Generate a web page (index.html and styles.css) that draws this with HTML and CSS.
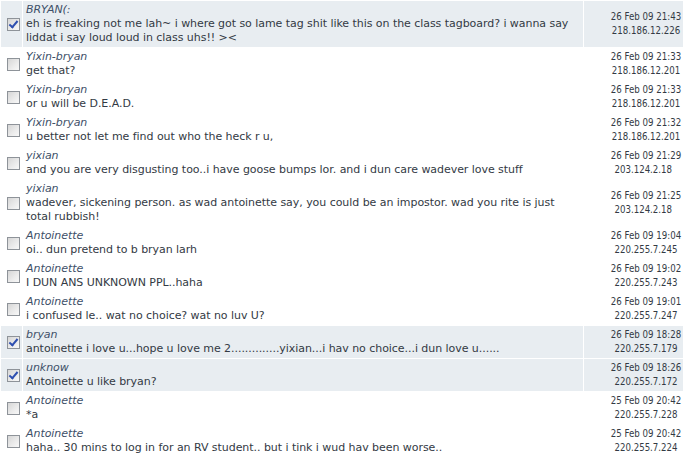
FILE: index.html
```html
<!DOCTYPE html>
<html>
<head>
<meta charset="utf-8">
<link rel="stylesheet" href="styles.css">
</head>
<body>
<table class="tags">
<colgroup><col class="c-chk"><col class="c-msg"><col class="c-date"></colgroup>
<tbody>
<tr class="sel"><td class="chk"><span class="box on"></span></td><td class="msg"><div class="name">BRYAN(:</div><div class="text">eh is freaking not me lah~ i where got so lame tag shit like this on the class tagboard? i wanna say liddat i say loud loud in class uhs!! &gt;&lt;</div></td><td class="date">26 Feb 09 21:43<br>218.186.12.226</td></tr>
<tr><td class="chk"><span class="box"></span></td><td class="msg"><div class="name">Yixin-bryan</div><div class="text">get that?</div></td><td class="date">26 Feb 09 21:33<br>218.186.12.201</td></tr>
<tr><td class="chk"><span class="box"></span></td><td class="msg"><div class="name">Yixin-bryan</div><div class="text">or u will be D.E.A.D.</div></td><td class="date">26 Feb 09 21:33<br>218.186.12.201</td></tr>
<tr><td class="chk"><span class="box"></span></td><td class="msg"><div class="name">Yixin-bryan</div><div class="text">u better not let me find out who the heck r u,</div></td><td class="date">26 Feb 09 21:32<br>218.186.12.201</td></tr>
<tr><td class="chk"><span class="box"></span></td><td class="msg"><div class="name">yixian</div><div class="text">and you are very disgusting too..i have goose bumps lor. and i dun care wadever love stuff</div></td><td class="date">26 Feb 09 21:29<br>203.124.2.18&nbsp;&nbsp;</td></tr>
<tr><td class="chk"><span class="box"></span></td><td class="msg"><div class="name">yixian</div><div class="text">wadever, sickening person. as wad antoinette say, you could be an impostor. wad you rite is just total rubbish!</div></td><td class="date">26 Feb 09 21:25<br>203.124.2.18&nbsp;&nbsp;</td></tr>
<tr><td class="chk"><span class="box"></span></td><td class="msg"><div class="name">Antoinette</div><div class="text">oi.. dun pretend to b bryan larh</div></td><td class="date">26 Feb 09 19:04<br>220.255.7.245</td></tr>
<tr><td class="chk"><span class="box"></span></td><td class="msg"><div class="name">Antoinette</div><div class="text">I DUN ANS UNKNOWN PPL..haha</div></td><td class="date">26 Feb 09 19:02<br>220.255.7.243</td></tr>
<tr><td class="chk"><span class="box"></span></td><td class="msg"><div class="name">Antoinette</div><div class="text">i confused le.. wat no choice? wat no luv U?</div></td><td class="date">26 Feb 09 19:01<br>220.255.7.247</td></tr>
<tr class="sel"><td class="chk"><span class="box on"></span></td><td class="msg"><div class="name">bryan</div><div class="text">antoinette i love u...hope u love me 2..............yixian...i hav no choice...i dun love u......</div></td><td class="date">26 Feb 09 18:28<br>220.255.7.179</td></tr>
<tr class="sel"><td class="chk"><span class="box on"></span></td><td class="msg"><div class="name">unknow</div><div class="text">Antoinette u like bryan?</div></td><td class="date">26 Feb 09 18:26<br>220.255.7.172</td></tr>
<tr><td class="chk"><span class="box"></span></td><td class="msg"><div class="name">Antoinette</div><div class="text">*a</div></td><td class="date">25 Feb 09 20:42<br>220.255.7.228</td></tr>
<tr><td class="chk"><span class="box"></span></td><td class="msg"><div class="name">Antoinette</div><div class="text">haha.. 30 mins to log in for an RV student.. but i tink i wud hav been worse..</div></td><td class="date">25 Feb 09 20:42<br>220.255.7.224</td></tr>
</tbody>
</table>
</body>
</html>
```

FILE: styles.css
```css
html, body {
  margin: 0;
  padding: 0;
  background: #ffffff;
}
body {
  font-family: "DejaVu Sans", Verdana, sans-serif;
  color: #333a44;
  overflow: hidden;
}
.tags {
  width: 684px;
  border-collapse: separate;
  border-spacing: 1px;
  table-layout: fixed;
}
.c-chk { width: 21px; }
.c-msg { width: 560px; }
.c-date { width: 99px; }
.tags td {
  box-sizing: border-box;
  padding: 2px 2px;
  line-height: 14px;
}
.sel td {
  background: #e8edf1;
}
.chk {
  vertical-align: middle;
  text-align: left;
  padding-left: 6px !important;
}
.msg {
  vertical-align: top;
  padding-left: 3px !important;
  padding-right: 6px !important;
  font-size: 11px;
  letter-spacing: -0.05px;
}
.name {
  font-style: italic;
  color: #405068;
}
.text {
  color: #333a44;
}
.date {
  vertical-align: middle;
  text-align: center;
  white-space: nowrap;
  font-family: "DejaVu Sans Condensed", "DejaVu Sans", sans-serif;
  font-stretch: condensed;
  font-size: 9.6px;
  color: #333a44;
  padding-right: 0 !important;
  padding-left: 25px !important;
}
.box {
  display: block;
  width: 11px;
  height: 11px;
  border: 1px solid #8e9399;
  background: linear-gradient(135deg, #d6d6d6 0%, #ececec 60%, #f8f8f8 100%);
  position: relative;
}
.box.on::after {
  content: "";
  position: absolute;
  left: 3px;
  top: 0px;
  width: 3px;
  height: 7px;
  border-right: 2px solid #2e4fb0;
  border-bottom: 2px solid #2e4fb0;
  transform: rotate(40deg);
}
```
